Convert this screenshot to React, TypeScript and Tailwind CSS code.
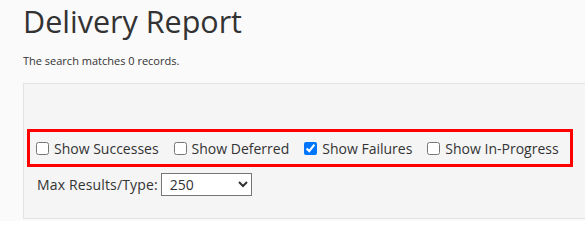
import React from "react";

function Check({ label, checked }: { label: string; checked?: boolean }) {
  return (
    <label className="flex items-center">
      <input type="checkbox" defaultChecked={checked} className="m-0 h-[13px] w-[13px] accent-[#0075ff]" />
      <span className="ml-[5px]">{label}</span>
    </label>
  );
}

export default function App() {
  return (
    <div className="h-[221px] w-[585px] overflow-hidden bg-[#fafafa] pl-[23px] text-[#333] font-['Open_Sans',sans-serif]">
      <h1 className="pt-[1px] text-[30.5px] leading-[40px]">Delivery Report</h1>
      <p className="mt-[12px] text-[11px] leading-[15px]">The search matches 0 records.</p>
      <div className="mt-[15px] h-[136px] w-[600px] border border-[#e3e3e3] bg-[#f5f5f5] pl-[3px] pt-[45px]">
        <div className="flex h-[38px] w-[546px] items-center gap-[15px] border-[3px] border-[#ff0000] pl-[6px] text-[14px]">
          <Check label="Show Successes" />
          <Check label="Show Deferred" />
          <Check label="Show Failures" checked />
          <Check label="Show In-Progress" />
        </div>
        <div className="mt-[6px] flex items-center pl-[10px] text-[14px]">
          <span className="tracking-[0.15px]">Max Results/Type:</span>
          <select className="ml-[3px] h-[23px] w-[91px] border border-[#767676] bg-white px-[4px] text-[14px]" defaultValue="250">
            <option>250</option>
          </select>
        </div>
      </div>
    </div>
  );
}
